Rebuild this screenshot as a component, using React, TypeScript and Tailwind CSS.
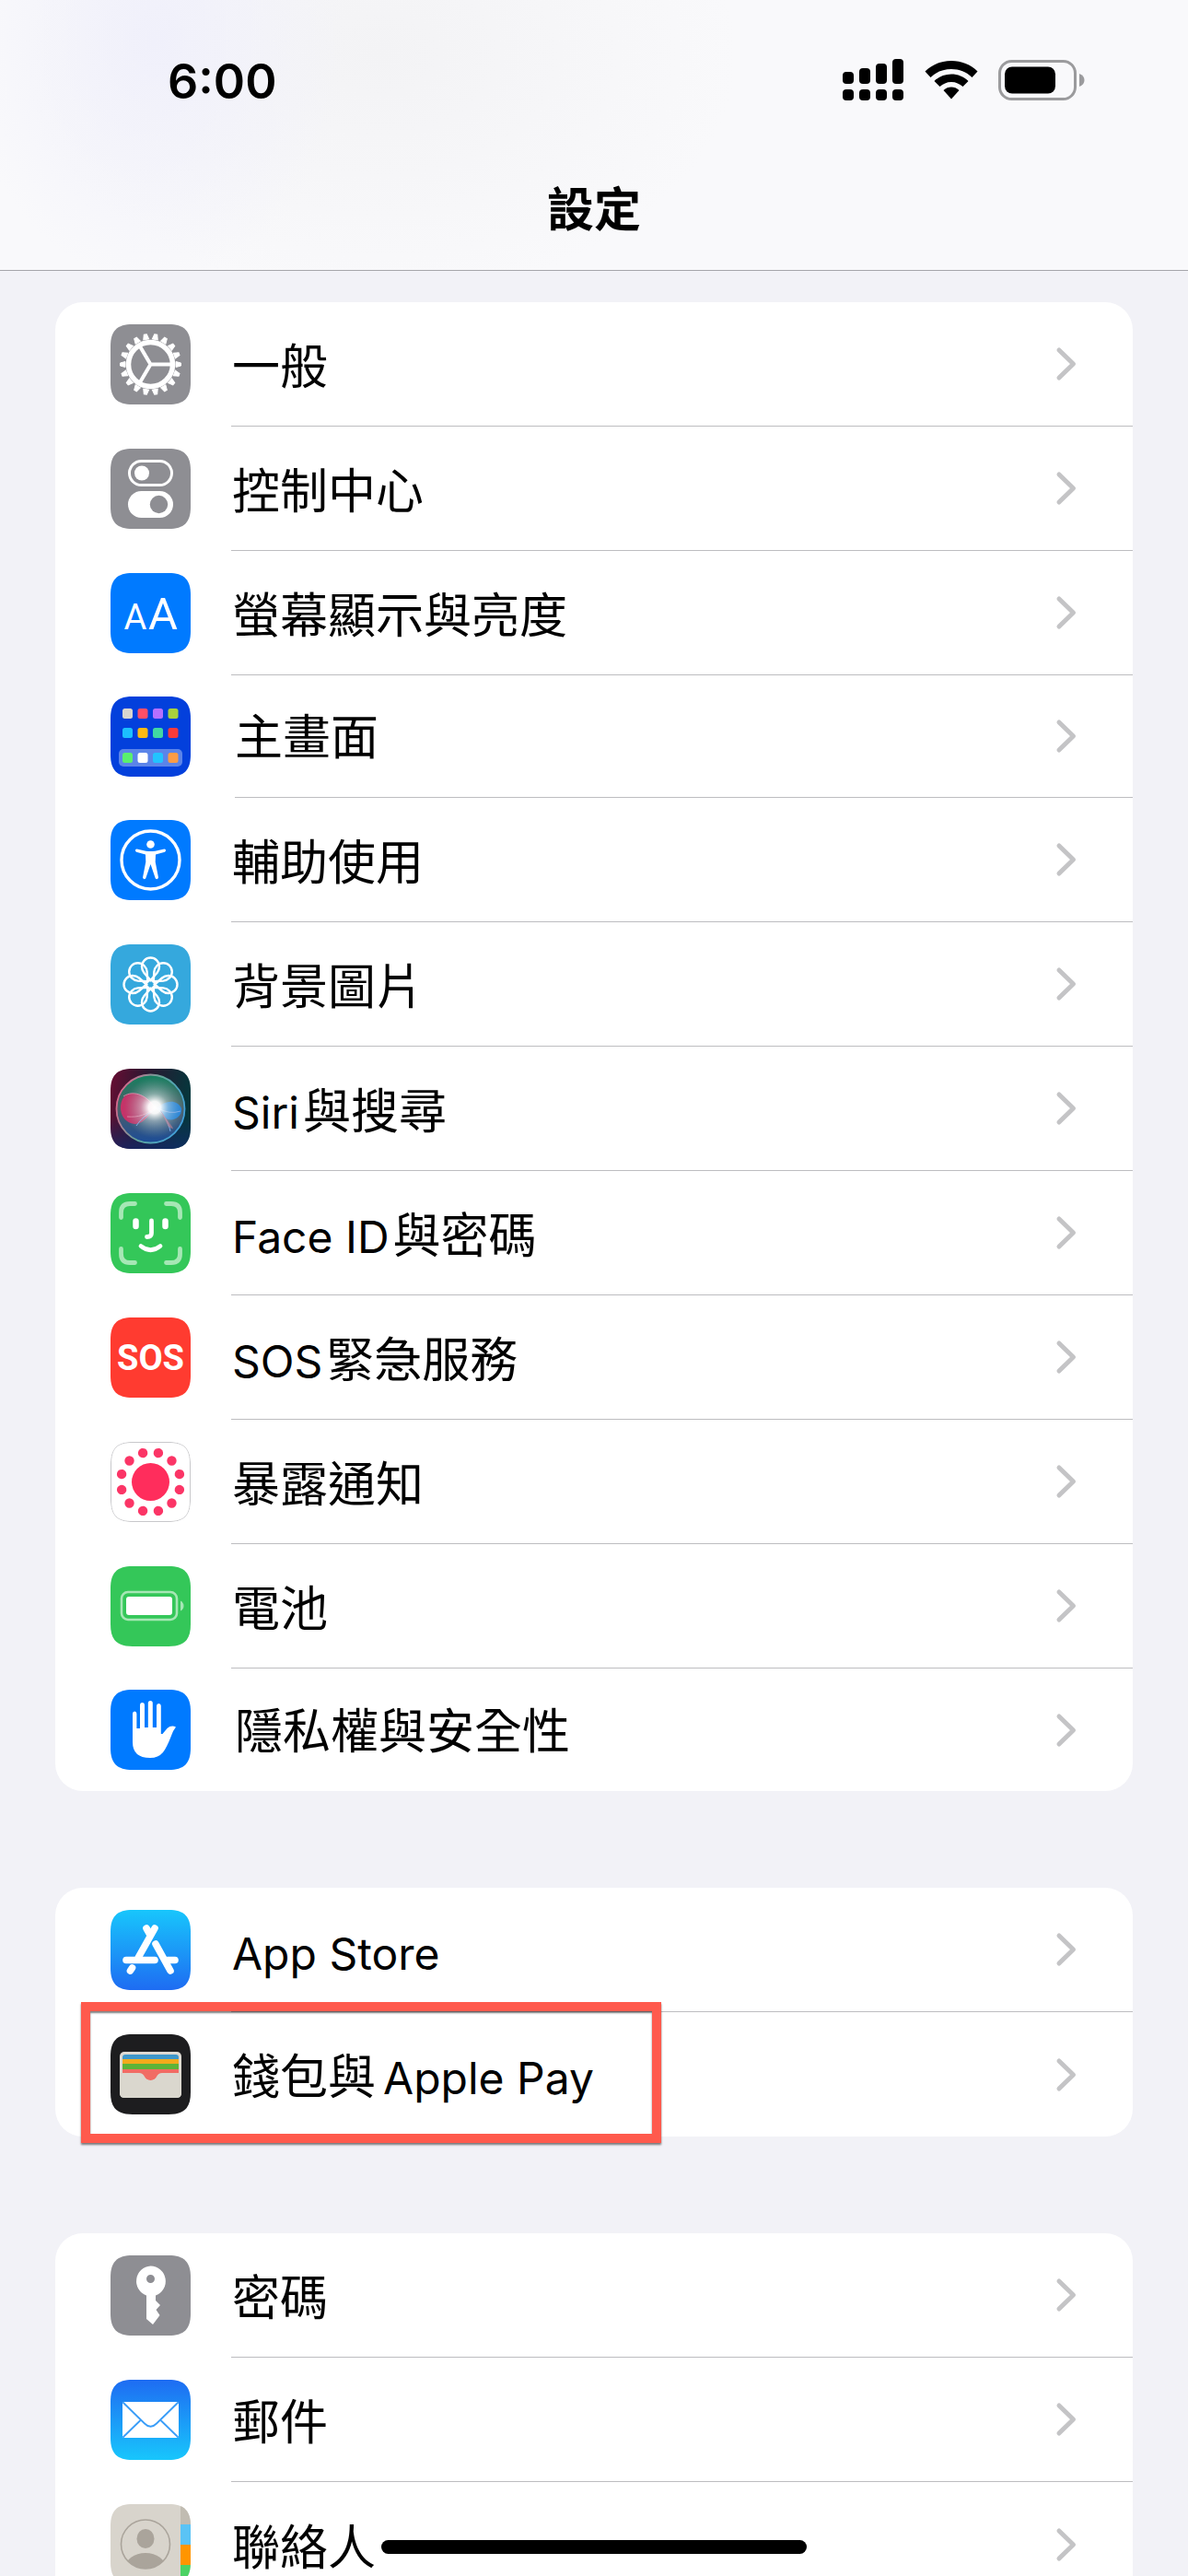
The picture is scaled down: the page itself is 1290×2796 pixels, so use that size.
import type { ReactNode } from "react";

interface RowData {
  label: string;
  icon: ReactNode;
  compact?: boolean;
}

interface RowProps extends RowData {
  last: boolean;
  highlighted?: boolean;
}

function Tile({ id, fill, children }: { id: string; fill: string; children?: ReactNode }) {
  return (
    <svg viewBox="0 0 87 87" className="size-[87px] shrink-0" aria-hidden="true">
      <clipPath id={`clip-${id}`}>
        <path d="M24 0H63C80 0 87 7 87 24V63C87 80 80 87 63 87H24C7 87 0 80 0 63V24C0 7 7 0 24 0Z" />
      </clipPath>
      <g clipPath={`url(#clip-${id})`}>
        <rect width="87" height="87" fill={fill} />
        {children}
      </g>
    </svg>
  );
}

const GearIcon = () => (
  <Tile id="gear" fill="#8e8e93">
    {[...Array(18)].map((_, i) => (
      <path key={i} d="M40.5 16L42 10.5H45L46.5 16Z" fill="#fff" stroke="#fff" strokeWidth="1" transform={`rotate(${10 + i * 20} 43.5 43.5)`} />
    ))}
    <circle cx="43.5" cy="43.5" r="24" fill="none" stroke="#fff" strokeWidth="5.5" />
    <path d="M43.5 43.5H66M43.5 43.5L32 24M43.5 43.5L32 63" stroke="#fff" strokeWidth="4" />
  </Tile>
);

const ControlIcon = () => (
  <Tile id="control" fill="#8e8e93">
    <rect x="20.5" y="13.5" width="46" height="26" rx="13" fill="none" stroke="#fff" strokeWidth="3" />
    <circle cx="34" cy="26.5" r="8" fill="#fff" />
    <rect x="19" y="46" width="49" height="29" rx="14.5" fill="#fff" />
    <circle cx="52.5" cy="60.5" r="9.7" fill="#8e8e93" />
  </Tile>
);

const DisplayIcon = () => (
  <Tile id="display" fill="#007aff">
    <g fill="#fff" textAnchor="middle" className="font-[Roboto,sans-serif]">
      <text x="27" y="61" className="text-[38px]">A</text>
      <text x="57" y="61" className="text-[49px]">A</text>
    </g>
  </Tile>
);

const APP_COLORS = [
  ["#d9d5cf", "#ff4f68", "#b570ff", "#a9d13c"],
  ["#1cc0ff", "#fdb913", "#41d8a3", "#f83b3b"],
  ["#5af06e", "#ffffff", "#22c3ff", "#fd9c45"],
];
const APP_TOPS = [13, 34, 61];

const HomeIcon = () => (
  <Tile id="home" fill="#0340dc">
    <rect x="9" y="57" width="69" height="19" rx="5" fill="#5b84e9" />
    {APP_COLORS.map((row, r) =>
      row.map((color, c) => (
        <rect key={color} x={13 + c * 16.5} y={APP_TOPS[r]} width="11" height="11" rx="2.5" fill={color} />
      ))
    )}
  </Tile>
);

const AccessibilityIcon = () => (
  <Tile id="access" fill="#007aff">
    <circle cx="43.5" cy="43.5" r="31.5" fill="none" stroke="#fff" strokeWidth="3.4" />
    <circle cx="43.5" cy="26.5" r="4.3" fill="#fff" />
    <path
      d="M28.5 31.5L38.5 33.7Q43.5 34.3 48.5 33.7L58.5 31.5Q61.5 32.5 59 34.8L49 37.5L48.7 45.5L52 62.5Q51 65.5 48.8 63.5L43.5 48L38.2 63.5Q36 65.5 35 62.5L38.3 45.5L38 37.5L28 34.8Q25.5 32.5 28.5 31.5Z"
      fill="#fff"
    />
  </Tile>
);

const WallpaperIcon = () => (
  <Tile id="wallpaper" fill="#35a8dd">
    <g fill="none" stroke="#fff" strokeWidth="2.4">
      {[...Array(8)].map((_, i) => (
        <path key={i} d="M43.5 39L36.5 31Q34 28 34 24A9.5 9.5 0 0 1 53 24Q53 28 50.5 31Z" transform={`rotate(${i * 45} 43.5 43.5)`} />
      ))}
      <circle cx="43.5" cy="43.5" r="4.5" />
    </g>
  </Tile>
);

const SiriIcon = () => (
  <Tile id="siri" fill="url(#siri-bg)">
    <defs>
      <linearGradient id="siri-bg" x1="0" y1="0" x2="1" y2="0.2">
        <stop offset="0" stopColor="#6a0d33" />
        <stop offset="0.45" stopColor="#2a1831" />
        <stop offset="1" stopColor="#06363c" />
      </linearGradient>
      <linearGradient id="siri-floor" x1="0" y1="0" x2="0" y2="1">
        <stop offset="0.6" stopColor="#12296e" stopOpacity="0" />
        <stop offset="1" stopColor="#12296e" stopOpacity="0.7" />
      </linearGradient>
      <radialGradient id="siri-glow" cx="0.56" cy="0.48" r="0.46">
        <stop offset="0" stopColor="#fff" />
        <stop offset="0.2" stopColor="#fff" stopOpacity="0.95" />
        <stop offset="0.45" stopColor="#d5e6e6" stopOpacity="0.5" />
        <stop offset="1" stopColor="#7fa5a5" stopOpacity="0" />
      </radialGradient>
      <linearGradient id="siri-orb" x1="0" y1="0" x2="0" y2="1">
        <stop offset="0" stopColor="#14805f" />
        <stop offset="0.5" stopColor="#4c5f68" />
        <stop offset="1" stopColor="#1b4c98" />
      </linearGradient>
      <linearGradient id="siri-ring" x1="0" y1="0.3" x2="1" y2="0.7">
        <stop offset="0" stopColor="#e0648c" />
        <stop offset="0.5" stopColor="#5fa79c" />
        <stop offset="1" stopColor="#3fa0e0" />
      </linearGradient>
    </defs>
    <rect width="87" height="87" fill="url(#siri-floor)" />
    <circle cx="43.5" cy="43.5" r="37" fill="url(#siri-orb)" stroke="url(#siri-ring)" strokeWidth="1.8" />
    <path d="M50 43C38 26 20 22 13 33C7 46 15 60 27 60C38 59 42 48 50 43Z" fill="#d42f68" opacity="0.9" />
    <path d="M50 43C60 34 72 33 77 43C78 53 67 58 60 54Z" fill="#1c7fdc" />
    <path d="M14 30C26 22 40 30 48 42C40 50 30 53 18 52" fill="none" stroke="#f08fb0" strokeWidth="0.8" />
    <path d="M28 62C35 51 46 46 50 43C57 48 63 58 65 68M52 43Q64 50 76 46" fill="none" stroke="#7ba7ed" strokeWidth="1" />
    <circle cx="43.5" cy="43.5" r="36" fill="url(#siri-glow)" />
    <path d="M54 45L67 63Q70 67 63 63Z" fill="#c58292" opacity="0.6" />
  </Tile>
);

const FaceIdIcon = () => (
  <Tile id="faceid" fill="#34c759">
    <g fill="none" strokeLinecap="round">
      <path
        d="M11.5 26.5V21Q11.5 11.5 21 11.5H26.5M60.5 11.5H66Q75.5 11.5 75.5 21V26.5M75.5 60.5V66Q75.5 75.5 66 75.5H60.5M26.5 75.5H21Q11.5 75.5 11.5 66V60.5"
        stroke="#a6e7b5"
        strokeWidth="4.8"
      />
      <path d="M27.5 30.5V36M59.5 30.5V36" stroke="#fff" strokeWidth="6.5" />
      <path d="M44.5 30V43.5Q44.5 47.5 39.5 47.5M33 57.5Q43.5 66 54 57.5" stroke="#fff" strokeWidth="4.8" />
    </g>
  </Tile>
);

const SosIcon = () => (
  <Tile id="sos" fill="#ff3b30">
    <text x="43.5" y="57" textAnchor="middle" fill="#fff" className="font-[Roboto,sans-serif] text-[38px] font-bold">
      SOS
    </text>
  </Tile>
);

const ExposureIcon = () => (
  <Tile id="exposure" fill="#fff">
    <path
      d="M24 0.5H63C80 0.5 86.5 7 86.5 24V63C86.5 80 80 86.5 63 86.5H24C7 86.5 0.5 80 0.5 63V24C0.5 7 7 0.5 24 0.5Z"
      fill="none"
      stroke="#c8c8cb"
    />
    <circle cx="43.5" cy="43.5" r="20.5" fill="#ff2d5c" />
    {[...Array(12)].map((_, i) => (
      <circle key={i} cx="43.5" cy="11" r="5.2" fill="#fb3566" transform={`rotate(${15 + i * 30} 43.5 43.5)`} />
    ))}
  </Tile>
);

const BatteryIcon = () => (
  <Tile id="battery" fill="#34c759">
    <rect x="12" y="28" width="60" height="30" rx="7" fill="none" stroke="#a6e7b5" strokeWidth="2.6" />
    <rect x="17" y="33" width="50" height="20" rx="3" fill="#fff" />
    <path d="M76 37.5Q79.5 39.5 79.5 43T76 48.5Z" fill="#a6e7b5" />
  </Tile>
);

const HandIcon = () => (
  <Tile id="hand" fill="#007aff">
    <path
      d="M24 57V26Q24 23.5 26.2 23.5T28.4 26V42H32V17Q32 14 34.5 14T37 17V41H40.8V14.5Q40.8 12 43.3 12T45.8 14.5V41H50V17.5Q50 15 52.4 15T54.8 17.5V48H56.5L61.5 42Q66 38 71 40.5Q68 44 66 50Q61 63 57 68Q52 74 43 74Q24 74 24 57Z"
      fill="#fff"
    />
  </Tile>
);

const AppStoreIcon = () => (
  <Tile id="appstore" fill="url(#appstore-bg)">
    <linearGradient id="appstore-bg" x1="0" y1="0" x2="0" y2="1">
      <stop offset="0" stopColor="#18c6fc" />
      <stop offset="1" stopColor="#1e6cf2" />
    </linearGradient>
    <g fill="none" stroke="#fff" strokeWidth="7.6" strokeLinecap="round">
      <path d="M48 20L30 52M39 20L43 27M49 37L65 66M17 54.5H48M62 54.5H70M23.5 63L21.5 66" />
    </g>
  </Tile>
);

const WalletIcon = () => (
  <Tile id="wallet" fill="#1d1d1f">
    <rect x="10" y="19" width="67" height="50" rx="5" fill="#dedad3" />
    <path d="M13 27V25Q13 22 16 22H71Q74 22 74 25V27Z" fill="#3e97ca" />
    <rect x="13" y="27" width="61" height="5" fill="#f2aa1c" />
    <rect x="13" y="32" width="61" height="6" fill="#5cb338" />
    <path d="M13 38H74V44H54Q48 50 43.5 50T33 44H13Z" fill="#f16c64" />
    <path d="M10 42H31Q35 42 37 46Q39 50 43.5 50T50 46Q52 42 56 42H77V64Q77 69 72 69H15Q10 69 10 64Z" fill="#dad7ce" />
  </Tile>
);

const KeyIcon = () => (
  <Tile id="key" fill="#8e8e93">
    <path
      fillRule="evenodd"
      d="M43.5 11.5A16.5 16.5 0 0 1 49 43.5V49L54 54L49.5 59L53.5 65L46 75L39 69V43.5A16.5 16.5 0 0 1 43.5 11.5ZM43.5 21A4.5 4.5 0 1 0 43.5 30A4.5 4.5 0 1 0 43.5 21Z"
      fill="#fff"
    />
  </Tile>
);

const MailIcon = () => (
  <Tile id="mail" fill="url(#mail-bg)">
    <linearGradient id="mail-bg" x1="0" y1="0" x2="0" y2="1">
      <stop offset="0" stopColor="#1e6cf2" />
      <stop offset="1" stopColor="#18c6fc" />
    </linearGradient>
    <rect x="13" y="24" width="61" height="39" rx="2" fill="#fff" />
    <path d="M13.5 24.5L37 47.5Q43.5 54 50 47.5L73.5 24.5M13.5 62.5L32.5 44M73.5 62.5L54.5 44" fill="none" stroke="#3a9df8" strokeWidth="1.8" />
  </Tile>
);

const ContactsIcon = () => (
  <Tile id="contacts" fill="#d8d4cc">
    <rect x="76" width="11" height="22" fill="#c1bcb2" />
    <rect x="76" y="22" width="11" height="22" fill="#5ac3f5" />
    <rect x="76" y="44" width="11" height="22" fill="#ff9500" />
    <rect x="76" y="66" width="11" height="21" fill="#4cd264" />
    <clipPath id="contact-face">
      <circle cx="38" cy="43.5" r="26.5" />
    </clipPath>
    <g clipPath="url(#contact-face)" fill="#aaa49b">
      <ellipse cx="38" cy="37.5" rx="9.5" ry="10.5" />
      <ellipse cx="38" cy="69" rx="22" ry="16" />
    </g>
    <circle cx="38" cy="43.5" r="26.5" fill="none" stroke="#aaa49b" strokeWidth="1.6" />
  </Tile>
);

const GROUPS: RowData[][] = [
  [
    { label: "一般", icon: <GearIcon /> },
    { label: "控制中心", icon: <ControlIcon /> },
    { label: "螢幕顯示與亮度", icon: <DisplayIcon /> },
    { label: "主畫面", icon: <HomeIcon />, compact: true },
    { label: "輔助使用", icon: <AccessibilityIcon /> },
    { label: "背景圖片", icon: <WallpaperIcon /> },
    { label: "Siri與搜尋", icon: <SiriIcon /> },
    { label: "Face ID與密碼", icon: <FaceIdIcon /> },
    { label: "SOS緊急服務", icon: <SosIcon /> },
    { label: "暴露通知", icon: <ExposureIcon /> },
    { label: "電池", icon: <BatteryIcon /> },
    { label: "隱私權與安全性", icon: <HandIcon />, compact: true },
  ],
  [
    { label: "App Store", icon: <AppStoreIcon /> },
    { label: "錢包與Apple Pay", icon: <WalletIcon /> },
  ],
  [
    { label: "密碼", icon: <KeyIcon /> },
    { label: "郵件", icon: <MailIcon /> },
    { label: "聯絡人", icon: <ContactsIcon /> },
  ],
];

// Latin runs are set a little smaller than the Chinese around them
function Label({ text }: { text: string }) {
  const parts = text.split(/([A-Za-z][A-Za-z ]*)/);
  return (
    <span className="text-[52px] leading-[68px]">
      {parts.map((part, i) =>
        i % 2 ? (
          <span key={i} className={`text-[48px] ${parts[i - 1] ? "ml-2" : "mr-1"}`}>{part}</span>
        ) : (
          part
        )
      )}
    </span>
  );
}

function SettingsRow({ label, icon, compact, last, highlighted }: RowProps) {
  return (
    <li className="relative">
      <button type="button" className={`flex w-full items-center pl-[60px] text-left ${compact ? "h-[133px] gap-[48px]" : "h-[135px] gap-[44px]"}`}>
        {icon}
        <span className={`flex h-full flex-1 items-center justify-between pr-[60px] ${last ? "" : "border-b border-[#bdbdc0]"}`}>
          <span className={compact ? "pt-1" : "pt-2 pl-px"}>
            <Label text={label} />
          </span>
          <svg viewBox="0 0 24 38" className="h-[38px] w-6" fill="none" stroke="#c4c4c6" strokeWidth="5" strokeLinecap="round" strokeLinejoin="round" aria-hidden="true">
            <path d="M4 4L19.5 19L4 34" />
          </svg>
        </span>
      </button>
      {highlighted && (
        <div className="pointer-events-none absolute -top-[11px] left-7 h-[153px] w-[630px] border-10 border-[#ff5a4d] shadow-[0_2px_2px_rgba(0,0,0,0.5),inset_0_2px_2px_rgba(0,0,0,0.5)]" />
      )}
    </li>
  );
}

function StatusBar() {
  return (
    <div className="flex h-[174px] items-center justify-between pr-[112px] pl-[182px]">
      <time className="pt-1 text-[52px] leading-none font-semibold">6:00</time>
      <div className="flex items-center gap-[22px]">
        <svg viewBox="0 0 67 46" className="h-[46px] w-[67px]" aria-label="Signal">
          <rect x="0" y="14" width="12" height="13" rx="4" />
          <rect x="18" y="10" width="12" height="17" rx="4" />
          <rect x="36" y="5" width="12" height="22" rx="4" />
          <rect x="54" y="0" width="12" height="27" rx="4" />
          {[0, 18, 36, 54].map((x) => (
            <rect key={x} x={x} y="33" width="12" height="12" rx="4" />
          ))}
        </svg>
        <svg viewBox="0 0 58 42" className="h-[42px] w-[58px]" aria-label="Wi-Fi">
          <path d="M29 0C40 0 50 4 57.5 11.5L51.5 18C45.5 12 37.5 9 29 9S12.5 12 6.5 18L0.5 11.5C8 4 18 0 29 0Z" />
          <path d="M29 14.5C36 14.5 42.5 17 47.5 22L41.5 28C38 25 34 23 29 23S20 25 16.5 28L10.5 22C15.5 17 22 14.5 29 14.5Z" />
          <path d="M29 28.5C32 28.5 35 29.5 37.5 32L29 41.5L20.5 32C23 29.5 26 28.5 29 28.5Z" />
        </svg>
        <svg viewBox="0 0 94 44" className="h-[44px] w-[94px]" aria-label="Battery">
          <rect x="1.5" y="1.5" width="82" height="41" rx="13" fill="none" stroke="#9b9b9d" strokeWidth="3" />
          <rect x="7" y="7.5" width="55" height="29" rx="8" />
          <path d="M88 15Q93.5 17 93.5 22T88 29Z" fill="#9b9b9d" />
        </svg>
      </div>
    </div>
  );
}

export default function App() {
  return (
    <div className="relative h-screen overflow-hidden bg-[#f2f2f7] font-[Inter,'Noto_Sans_CJK_TC',sans-serif] text-black">
      <header className="border-b border-[#a6a6aa] bg-[#f9f9fb] bg-[radial-gradient(ellipse_16%_90%_at_13%_15%,#f0f0fb_0%,transparent_100%),radial-gradient(ellipse_30%_90%_at_32%_20%,#f3f3f5_0%,transparent_100%)]">
        <StatusBar />
        <h1 className="h-[119px] pt-5 text-center text-[51px] leading-[68px] font-bold">設定</h1>
      </header>
      <main className="flex flex-col gap-[105px] px-[60px] pt-[34px]">
        {GROUPS.map((rows, g) => (
          <ul key={g} className="rounded-[30px] bg-white">
            {rows.map((row, i) => (
              <SettingsRow key={row.label} {...row} last={i === rows.length - 1} highlighted={row.label === "錢包與Apple Pay"} />
            ))}
          </ul>
        ))}
      </main>
      {/* Home indicator */}
      <div className="absolute bottom-6 left-1/2 h-[15px] w-[462px] -translate-x-1/2 rounded-full bg-black" />
    </div>
  );
}
